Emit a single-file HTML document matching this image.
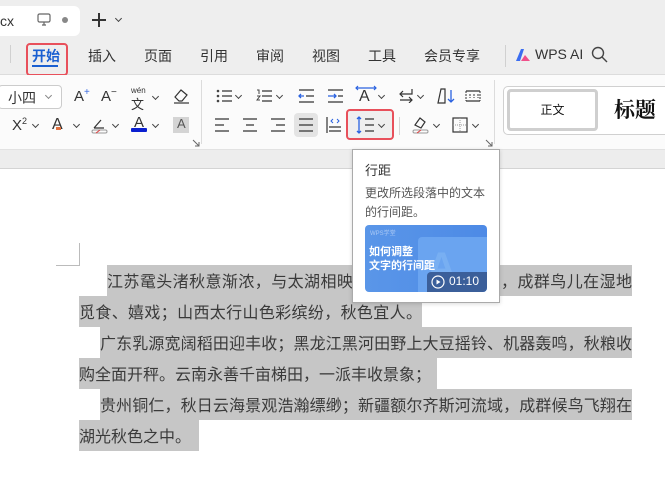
<!DOCTYPE html>
<html><head><meta charset="utf-8"><style>
*{margin:0;padding:0;box-sizing:border-box}
body{width:665px;height:485px;overflow:hidden;background:#fff;font-family:"Liberation Sans","Noto Sans CJK SC",sans-serif;position:relative;color:#222}
.a{position:absolute}
.top{left:0;top:0;width:665px;height:75px;background:#eeeeee;border-bottom:1px solid #dcdcdc}
.tab{left:-10px;top:6px;width:90px;height:30px;background:#fff;border-radius:6px}
.m{top:46px;font-size:14px;color:#333}
.tb{left:0;top:75px;width:665px;height:74px;background:#fbfbfb}
.band{left:0;top:149px;width:665px;height:20px;background:#ededed;border-top:1px solid #e2e2e2;border-bottom:1px solid #d4d4d4}
.ic{font-size:14px;color:#333}
.chev{width:5px;height:5px;border-right:1.3px solid #444;border-bottom:1.3px solid #444;transform:rotate(45deg)}
.ln{position:absolute;left:0;height:1.3px;background:#333}
.sel{background:#c6c6c6;height:31px;font-family:"Noto Sans CJK SC",sans-serif;font-size:16px;color:#3a3a3a;line-height:31px;text-align-last:justify;white-space:nowrap;overflow:hidden}
</style></head><body>
<div class="a top"></div>
<div class="a tab"></div>
<div class="a" style="left:0;top:13px;font-size:14px;color:#333">cx</div>
<svg class="a" style="left:37px;top:13px" width="14" height="13"><rect x="1" y="1" width="12" height="8" rx="1.5" fill="none" stroke="#666" stroke-width="1.2"/><path d="M5 12h4M7 9v3" stroke="#666" stroke-width="1.2"/></svg>
<div class="a" style="left:62px;top:17px;width:6px;height:6px;border-radius:50%;background:#888"></div>
<svg class="a" style="left:91px;top:12px" width="16" height="16"><path d="M8 1v14M1 8h14" stroke="#333" stroke-width="2"/></svg>
<div class="a chev" style="left:116px;top:16px"></div>
<div class="a" style="left:10px;top:45px;width:1px;height:18px;background:#d0d0d0"></div>
<div class="a" style="left:26px;top:43px;width:42px;height:33px;border:2px solid #e8505b;border-radius:4px"></div>
<div class="a m" style="left:32px;color:#1a5fd1;font-weight:bold">开始</div>
<div class="a" style="left:32px;top:65px;width:26px;height:2px;background:#1a5fd1"></div>
<div class="a m" style="left:88px">插入</div>
<div class="a m" style="left:144px">页面</div>
<div class="a m" style="left:200px">引用</div>
<div class="a m" style="left:256px">审阅</div>
<div class="a m" style="left:312px">视图</div>
<div class="a m" style="left:368px">工具</div>
<div class="a m" style="left:424px">会员专享</div>
<div class="a" style="left:505px;top:45px;width:1px;height:22px;background:#d0d0d0"></div>
<svg class="a" style="left:515px;top:48px" width="16" height="14"><path d="M1 13L6 1h3L5 13z" fill="#3b6df0"/><path d="M6 13l4-6 5 6z" fill="#f0508a"/></svg>
<div class="a" style="left:535px;top:46px;font-size:14px;color:#333">WPS AI</div>
<svg class="a" style="left:591px;top:46px" width="17" height="17"><circle cx="7" cy="7" r="5.5" fill="none" stroke="#444" stroke-width="1.4"/><path d="M11 11l5 5" stroke="#444" stroke-width="1.4"/></svg>

<div class="a tb"></div>
<!-- row 1 left -->
<div class="a" style="left:-2px;top:85px;width:64px;height:24px;border:1px solid #ccc;border-radius:4px;background:#fff"></div>
<div class="a ic" style="left:8px;top:88px">小四</div>
<div class="a chev" style="left:46px;top:93px;border-color:#888"></div>
<div class="a ic" style="left:74px;top:87px;font-size:15px">A<sup style="color:#3a6be0;font-size:10px">+</sup></div>
<div class="a ic" style="left:101px;top:87px;font-size:15px">A<sup style="font-size:10px">−</sup></div>
<div class="a" style="left:131px;top:86px;font-size:8px;color:#333">wén</div>
<div class="a ic" style="left:131px;top:94px;font-size:13px">文</div>
<div class="a chev" style="left:153px;top:94px"></div>
<svg class="a" style="left:172px;top:87px" width="18" height="17"><path d="M3 10l6-7 6 5-5 6H7z" fill="none" stroke="#333" stroke-width="1.2"/><path d="M2 16h15" stroke="#333" stroke-width="1.2"/></svg>
<!-- row 2 left -->
<div class="a ic" style="left:12px;top:116px;font-size:15px">X<sup style="font-size:9px">2</sup></div>
<div class="a chev" style="left:33px;top:122px"></div>
<div class="a ic" style="left:52px;top:116px;font-size:16px">A</div>
<div class="a" style="left:56px;top:127px;width:5px;height:3px;background:#e07040"></div>
<div class="a chev" style="left:74px;top:122px"></div>
<svg class="a" style="left:91px;top:116px" width="18" height="18"><path d="M3 12l7-8M3 12h10" stroke="#333" stroke-width="1.2" fill="none"/><rect x="1" y="14" width="15" height="3" rx="1.5" fill="none" stroke="#999"/><path d="M5 17l4-3" stroke="#e04040"/></svg>
<div class="a chev" style="left:113px;top:122px"></div>
<div class="a ic" style="left:134px;top:114px;font-size:15px">A</div>
<div class="a" style="left:131px;top:128px;width:16px;height:4px;background:#0a1fd0;border-radius:1px"></div>
<div class="a chev" style="left:153px;top:122px"></div>
<div class="a" style="left:173px;top:117px;width:16px;height:16px;background:#d4d4d4"></div>
<div class="a ic" style="left:177px;top:116px;font-size:13px;color:#555">A</div>
<div class="a" style="left:201px;top:80px;width:1px;height:64px;background:#dcdcdc"></div>
<svg class="a" style="left:192px;top:139px" width="8" height="8"><path d="M1 1l6 6M3 7h4V3" stroke="#666" fill="none"/></svg>
<!-- row 1 mid -->
<svg class="a" style="left:216px;top:89px" width="16" height="14"><g fill="#444"><circle cx="2" cy="2" r="1.3"/><circle cx="2" cy="7" r="1.3"/><circle cx="2" cy="12" r="1.3"/></g><path d="M6 2h10M6 7h10M6 12h10" stroke="#333" stroke-width="1.3"/></svg>
<div class="a chev" style="left:236px;top:93px"></div>
<svg class="a" style="left:256px;top:89px" width="16" height="14"><path d="M1 1h2v4M1 7h3l-3 4h3" stroke="#444" fill="none"/><path d="M6 2h10M6 7h10M6 12h10" stroke="#333" stroke-width="1.3"/></svg>
<div class="a chev" style="left:277px;top:93px"></div>
<svg class="a" style="left:298px;top:89px" width="16" height="14"><path d="M1 1h15M8 7h8M1 13h15" stroke="#333" stroke-width="1.3"/><path d="M6 7H1M3 5L1 7l2 2" stroke="#2a62e0" stroke-width="1.3" fill="none"/></svg>
<svg class="a" style="left:327px;top:89px" width="16" height="14"><path d="M1 1h15M11 7h5M1 13h15" stroke="#333" stroke-width="1.3"/><path d="M1 7h8M7 5l2 2-2 2" stroke="#2a62e0" stroke-width="1.3" fill="none"/></svg>
<div class="a ic" style="left:359px;top:88px;font-size:16px">A</div>
<svg class="a" style="left:355px;top:85px" width="22" height="6"><path d="M1 3h20M3 1L1 3l2 2M19 1l2 2-2 2" stroke="#2a62e0" fill="none" stroke-width="1.2"/></svg>
<div class="a chev" style="left:379px;top:93px"></div>
<svg class="a" style="left:398px;top:87px" width="16" height="16"><path d="M14 2v5H2M5 4L2 7l3 3M2 13h12M11 10l3 3-3 3" stroke="#333" fill="none" stroke-width="1.2"/></svg>
<div class="a chev" style="left:418px;top:93px"></div>
<svg class="a" style="left:437px;top:88px" width="18" height="16"><path d="M1 15L4 1h4v14z" fill="none" stroke="#333" stroke-width="1.2"/><path d="M14 2v12M11 11l3 3 3-3" stroke="#2a62e0" fill="none" stroke-width="1.3"/></svg>
<svg class="a" style="left:465px;top:90px" width="16" height="12"><path d="M1 1h14M1 11h14" stroke="#333" stroke-width="1.3"/><path d="M1 1v10M5 4v4M9 4v4M13 4v4M15 1v10" stroke="#333" stroke-dasharray="2 1"/></svg>
<!-- row 2 mid -->
<svg class="a" style="left:214px;top:118px" width="16" height="14"><path d="M1 1h14M1 7h9M1 13h14" stroke="#333" stroke-width="1.3"/></svg>
<svg class="a" style="left:242px;top:118px" width="16" height="14"><path d="M1 1h14M4 7h8M1 13h14" stroke="#333" stroke-width="1.3"/></svg>
<svg class="a" style="left:270px;top:118px" width="16" height="14"><path d="M1 1h14M6 7h9M1 13h14" stroke="#333" stroke-width="1.3"/></svg>
<div class="a" style="left:294px;top:113px;width:24px;height:24px;background:#e4e4e4;border-radius:4px"></div>
<svg class="a" style="left:298px;top:118px" width="16" height="14"><path d="M1 1h14M1 7h14M1 13h14" stroke="#333" stroke-width="1.3"/></svg>
<svg class="a" style="left:326px;top:116px" width="16" height="18"><path d="M1 1v16M3 11h12M3 15h12" stroke="#333" stroke-width="1.2"/><path d="M7 3L5 5l2 2M11 3l2 2-2 2" stroke="#2a62e0" fill="none"/></svg>
<div class="a" style="left:346px;top:109px;width:48px;height:31px;border:2px solid #e8505b;border-radius:4px;background:#efefef"></div>
<svg class="a" style="left:356px;top:116px" width="20" height="18"><path d="M3 1v16M1 3l2-2 2 2M1 15l2 2 2-2" stroke="#2a62e0" fill="none" stroke-width="1.3"/><path d="M9 3h9M9 9h9M9 15h9" stroke="#333" stroke-width="1.3"/></svg>
<div class="a chev" style="left:379px;top:122px"></div>
<div class="a" style="left:399px;top:117px;width:1px;height:18px;background:#d6d6d6"></div>
<svg class="a" style="left:412px;top:115px" width="18" height="19"><path d="M3 10l5-7 5 4-4 6z" fill="none" stroke="#333" stroke-width="1.2"/><rect x="1" y="15" width="15" height="3" rx="1.5" fill="none" stroke="#999"/><path d="M5 18l4-3" stroke="#e04040"/></svg>
<div class="a chev" style="left:434px;top:122px"></div>
<svg class="a" style="left:452px;top:117px" width="16" height="16"><rect x="1" y="1" width="14" height="14" fill="none" stroke="#333" stroke-width="1.2"/><path d="M8 1v14M1 8h14" stroke="#999" stroke-dasharray="1 1"/></svg>
<div class="a chev" style="left:473px;top:122px"></div>
<div class="a" style="left:494px;top:80px;width:1px;height:64px;background:#dcdcdc"></div>
<svg class="a" style="left:485px;top:139px" width="8" height="8"><path d="M1 1l6 6M3 7h4V3" stroke="#666" fill="none"/></svg>
<!-- styles -->
<div class="a" style="left:503px;top:86px;width:170px;height:49px;border:1px solid #d0d0d0;border-radius:5px;background:#fff"></div>
<div class="a" style="left:507px;top:89px;width:91px;height:42px;border:3px solid #cfcfcf;border-radius:4px;background:#fff;font-size:12px;color:#111;text-align:center;line-height:36px">正文</div>
<div class="a" style="left:614px;top:94px;font-size:21px;font-weight:bold;font-family:'Noto Serif CJK SC',serif;color:#111">标题</div>

<div class="a band"></div>
<!-- corner mark -->
<div class="a" style="left:79px;top:243px;width:1px;height:22px;background:#bbb"></div>
<div class="a" style="left:56px;top:265px;width:24px;height:1px;background:#bbb"></div>
<!-- text -->
<div class="a sel" style="left:107px;top:265px;width:525px">江苏鼋头渚秋意渐浓，与太湖相映成趣；江西鄱阳湖畔，成群鸟儿在湿地</div>
<div class="a sel" style="left:79px;top:296px;width:343px">觅食、嬉戏；山西太行山色彩缤纷，秋色宜人。</div>
<div class="a sel" style="left:100px;top:327px;width:532px">广东乳源宽阔稻田迎丰收；黑龙江黑河田野上大豆摇铃、机器轰鸣，秋粮收</div>
<div class="a sel" style="left:79px;top:358px;width:358px;text-align-last:auto">购全面开秤。云南永善千亩梯田，一派丰收景象；</div>
<div class="a sel" style="left:100px;top:389px;width:532px">贵州铜仁，秋日云海景观浩瀚缥缈；新疆额尔齐斯河流域，成群候鸟飞翔在</div>
<div class="a sel" style="left:79px;top:420px;width:120px;text-align-last:auto">湖光秋色之中。</div>
<!-- popup -->
<div class="a" style="left:352px;top:149px;width:148px;height:154px;background:#fff;border:1px solid #aaa;box-shadow:0 1px 4px rgba(0,0,0,.15)"></div>
<div class="a" style="left:365px;top:160px;font-size:13px;color:#333">行距</div>
<div class="a" style="left:365px;top:184px;font-size:12px;color:#555;line-height:19px;width:125px">更改所选段落中的文本的行间距。</div>
<div class="a" style="left:365px;top:225px;width:122px;height:67px;border-radius:4px;background:linear-gradient(90deg,#5a96e8,#4d8ae6);overflow:hidden">
<div class="a" style="left:53px;top:12px;width:80px;height:60px;background:#6aa4f0;border-radius:4px"></div>
<div class="a" style="left:62px;top:20px;font-size:40px;font-weight:bold;color:#78aff2">A</div>
<div class="a" style="left:5px;top:3px;font-size:6px;color:#a9c8f5">WPS学堂</div>
<div class="a" style="left:4px;top:20px;font-size:11px;font-weight:bold;color:#fff;line-height:14px">如何调整<br>文字的行间距</div>
<div class="a" style="left:62px;top:47px;width:60px;height:20px;background:#3b5f9a;border-radius:4px 0 4px 0"></div>
<svg class="a" style="left:66px;top:50px" width="14" height="14"><circle cx="7" cy="7" r="6" fill="none" stroke="#fff" stroke-width="1.2"/><path d="M5.5 4.5v5l4-2.5z" fill="#fff"/></svg>
<div class="a" style="left:84px;top:49px;font-size:12px;color:#fff">01:10</div>
</div>
</body></html>
